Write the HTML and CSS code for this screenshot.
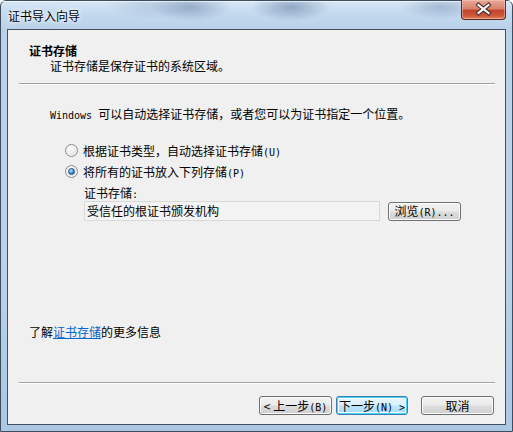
FILE: index.html
```html
<!DOCTYPE html>
<html lang="zh-CN">
<head>
<meta charset="utf-8">
<title>证书导入向导</title>
<link rel="stylesheet" href="styles.css">
</head>
<body>
<div class="window">
  <div class="titlebar">
    <div class="title">证书导入向导</div>
    <div class="close">
      <svg width="45" height="20" viewBox="0 0 45 20">
        <path d="M17.5 6 L27.5 14 M27.5 6 L17.5 14" stroke="#4a2a25" stroke-width="4.2" stroke-linecap="square"/>
        <path d="M17.5 6 L27.5 14 M27.5 6 L17.5 14" stroke="#ffffff" stroke-width="2.2" stroke-linecap="square"/>
      </svg>
    </div>
  </div>
  <div class="client">
    <div class="header">
      <div class="h-title">证书存储</div>
      <div class="h-sub">证书存储是保存证书的系统区域。</div>
    </div>
    <div class="sep"></div>
    <div class="body">
      <p class="intro"><span class="m">Windows </span>可以自动选择证书存储，或者您可以为证书指定一个位置。</p>
      <div class="option first">
        <span class="radio"></span>
        <span>根据证书类型，自动选择证书存储<span class="m">(U)</span></span>
      </div>
      <div class="option">
        <span class="radio checked"></span>
        <span>将所有的证书放入下列存储<span class="m">(P)</span></span>
      </div>
      <div class="store">
        <div class="store-label">证书存储<span class="m">:</span></div>
        <div class="store-row">
          <div class="field">受信任的根证书颁发机构</div>
          <button class="btn browse">浏览<span class="m">(R)...</span></button>
        </div>
      </div>
      <p class="more">了解<a href="#">证书存储</a>的更多信息</p>
    </div>
    <div class="footer">
      <div class="sep"></div>
      <div class="buttons">
        <button class="btn">&lt; 上一步<span class="m">(B)</span></button>
        <button class="btn default">下一步<span class="m">(N) &gt;</span></button>
        <button class="btn cancel">取消</button>
      </div>
    </div>
  </div>
</div>
</body>
</html>
```

FILE: styles.css
```css
html, body {
  margin: 0;
  padding: 0;
  background: #ffffff;
}

body {
  width: 513px;
  height: 432px;
  overflow: hidden;
  font-family: "Noto Sans CJK SC", "Noto Sans", sans-serif;
  font-size: 12px;
  color: #000;
}

.m {
  font-family: "DejaVu Sans Mono", "Liberation Mono", monospace;
  font-size: 10px;
  line-height: 1;
}

.window {
  width: 513px;
  height: 432px;
  box-sizing: border-box;
  border: 1px solid #3e4d5e;
  border-radius: 6px 6px 0 0;
  display: flex;
  flex-direction: column;
  background:
    radial-gradient(ellipse 40px 14px at 190px 6px, rgba(70,100,140,0.4), rgba(70,100,140,0) 100%),
    radial-gradient(ellipse 40px 14px at 290px 6px, rgba(70,100,140,0.45), rgba(70,100,140,0) 100%),
    radial-gradient(ellipse 40px 12px at 440px 6px, rgba(70,100,140,0.3), rgba(70,100,140,0) 100%),
    radial-gradient(ellipse 45px 14px at 150px 4px, rgba(90,120,160,0.2), rgba(90,120,160,0) 100%),
    linear-gradient(180deg, #d6e6f5 0px, #c2d8ee 14px, #bad1ea 28px, #bbd2ea 60%, #abc7e4 100%);
}

.titlebar {
  height: 28px;
  display: flex;
  align-items: flex-start;
  box-shadow: inset 0 1px 0 rgba(255,255,255,0.6);
}

.title {
  padding: 6px 0 0 7px;
  line-height: 17px;
  text-shadow: 0 0 6px #ffffff, 0 0 3px #ffffff;
}

.close {
  margin-left: auto;
  margin-right: 6px;
  margin-top: -1px;
  width: 45px;
  height: 20px;
  box-sizing: border-box;
  border: 1px solid #5c2a20;
  border-top: none;
  border-radius: 0 0 4px 4px;
  background: linear-gradient(180deg, #e7a797 0%, #d9836e 45%, #c2442b 55%, #cf5a3c 85%, #e08b67 100%);
  box-shadow: inset 0 0 0 1px rgba(255,210,195,0.45);
  position: relative;
}

.close svg {
  position: absolute;
  left: -1px;
  top: -1px;
}

.client {
  flex: 1;
  margin: 0 6px 6px 6px;
  border: 1px solid #44505d;
  background: #f0f0f0;
  display: flex;
  flex-direction: column;
}

.header {
  padding: 13px 0 0 21px;
  line-height: 15px;
}

.h-title,
.h-sub {
  height: 15px;
}

.h-title {
  font-weight: 700;
}

.h-sub {
  padding-left: 21px;
}

.sep {
  margin: 10px 10px 0 11px;
  height: 1px;
  background: #a0a0a0;
  border-bottom: 1px solid #ffffff;
}

.body {
  padding-left: 42px;
  line-height: 15px;
}

.intro {
  margin: 21px 0 0 0;
  height: 15px;
}

.option {
  display: flex;
  align-items: center;
  height: 15px;
  margin-left: 15px;
  margin-top: 6px;
  gap: 5px;
}

.option.first {
  margin-top: 22px;
}

.radio {
  width: 11px;
  height: 11px;
  border: 1px solid #8a8a8a;
  border-radius: 50%;
  background: radial-gradient(circle at 40% 35%, #ffffff 0%, #f0f0f0 40%, #d2d2d2 100%);
  box-shadow: inset 0 0 0 1px #f4f4f4;
  display: flex;
  align-items: center;
  justify-content: center;
  flex: none;
}

.radio.checked::after {
  content: "";
  width: 5px;
  height: 5px;
  border-radius: 50%;
  background: radial-gradient(circle at 35% 30%, #b9e6ff 0%, #3d8ed4 55%, #1d4f8e 100%);
  border: 1px solid #1c4f88;
}

.store {
  margin-left: 34px;
  margin-top: 6px;
}

.store-label {
  height: 15px;
}

.store-row {
  display: flex;
  align-items: center;
  margin-top: 1px;
  gap: 8px;
}

.field {
  width: 296px;
  height: 20px;
  box-sizing: border-box;
  border: 1px solid #d9d9d9;
  background: #f3f3f3;
  line-height: 18px;
  padding-left: 2px;
}

.btn {
  font-family: "Noto Sans CJK SC", "Noto Sans", sans-serif;
  font-size: 12px;
  color: #000;
  height: 19px;
  width: 73px;
  padding: 0;
  margin: 0;
  box-sizing: border-box;
  border: 1px solid #707070;
  border-radius: 3px;
  background: linear-gradient(180deg, #f2f2f2 0%, #ebebeb 48%, #dddddd 52%, #cfcfcf 100%);
  box-shadow: inset 0 0 0 1px #fbfbfb;
  line-height: 16px;
  white-space: nowrap;
}

.btn.browse {
  width: 73px;
  height: 19px;
}

.more {
  margin: 103px 0 0 -21px;
  height: 15px;
}

.more a {
  color: #0066cc;
  text-decoration: underline;
}

.footer {
  margin-top: auto;
  padding-bottom: 9px;
}

.footer .sep {
  margin-top: 0;
}

.buttons {
  display: flex;
  justify-content: flex-end;
  margin-top: 12px;
  padding-right: 11px;
  gap: 4px;
}

.btn.default {
  width: 72px;
  border-color: #3c7fb1;
  background: linear-gradient(180deg, #eaf6fd 0%, #d9f0fc 48%, #bee6fd 52%, #a7d9f5 100%);
  box-shadow: inset 0 0 0 1px #48d2f8, inset 0 0 0 2px #f4fbfe;
}

.btn.cancel {
  margin-left: 9px;
}
```
